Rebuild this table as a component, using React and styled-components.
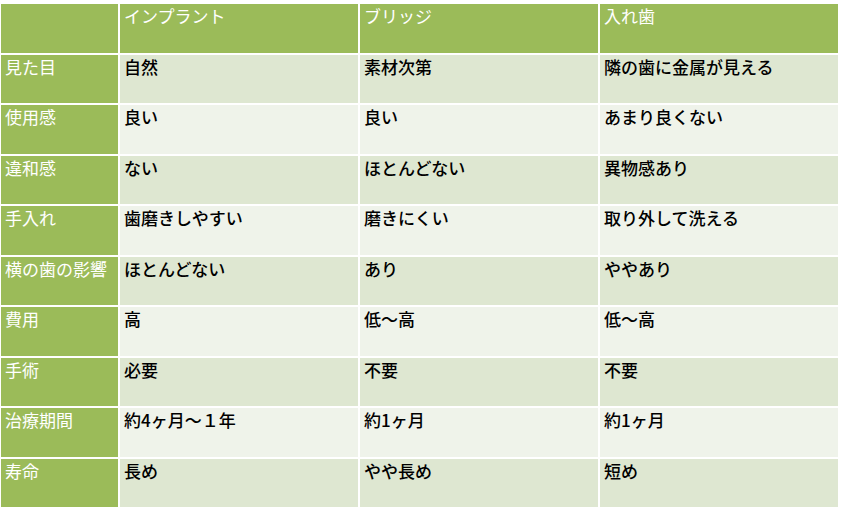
import React from "react";
import styled, { createGlobalStyle } from "styled-components";

const GlobalStyle = createGlobalStyle`
  html, body {
    margin: 0;
    padding: 0;
    background: #ffffff;
  }
  body {
    font-family: "Noto Sans CJK JP", "Noto Sans", sans-serif;
  }
`;

const Page = styled.div`
  padding: 4px 0 0 1px;
  width: 842px;
  height: 510px;
  box-sizing: border-box;
`;

const Grid = styled.div`
  display: grid;
  grid-template-columns: 117px 238px 238px 238px;
  grid-auto-rows: 48.5px;
  gap: 2px;
  background: #ffffff;
`;

const Cell = styled.div`
  box-sizing: border-box;
  padding: 1px 4px 0;
  font-size: 17px;
  font-weight: ${({ $kind }) => ($kind === "head" ? 400 : 500)};
  line-height: 1.3;
  white-space: nowrap;
  overflow: hidden;
  background: ${({ $kind }) =>
    $kind === "head"
      ? "#9bbb59"
      : $kind === "dark"
      ? "#dee7d1"
      : "#eff3ea"};
  color: ${({ $kind }) => ($kind === "head" ? "#ffffff" : "#000000")};
`;

const columns = ["インプラント", "ブリッジ", "入れ歯"];

const rows = [
  ["見た目", "自然", "素材次第", "隣の歯に金属が見える"],
  ["使用感", "良い", "良い", "あまり良くない"],
  ["違和感", "ない", "ほとんどない", "異物感あり"],
  ["手入れ", "歯磨きしやすい", "磨きにくい", "取り外して洗える"],
  ["横の歯の影響", "ほとんどない", "あり", "ややあり"],
  ["費用", "高", "低～高", "低～高"],
  ["手術", "必要", "不要", "不要"],
  ["治療期間", "約4ヶ月～１年", "約1ヶ月", "約1ヶ月"],
  ["寿命", "長め", "やや長め", "短め"],
];

const App = () => {
  return (
    <Page>
      <GlobalStyle />
      <Grid>
        <Cell $kind="head" />
        {columns.map((c) => (
          <Cell key={c} $kind="head">
            {c}
          </Cell>
        ))}
        {rows.map((r, i) => (
          <React.Fragment key={r[0]}>
            <Cell $kind="head">{r[0]}</Cell>
            {r.slice(1).map((v, j) => (
              <Cell key={j} $kind={i % 2 === 0 ? "dark" : "light"}>
                {v}
              </Cell>
            ))}
          </React.Fragment>
        ))}
      </Grid>
    </Page>
  );
};

export default App;
